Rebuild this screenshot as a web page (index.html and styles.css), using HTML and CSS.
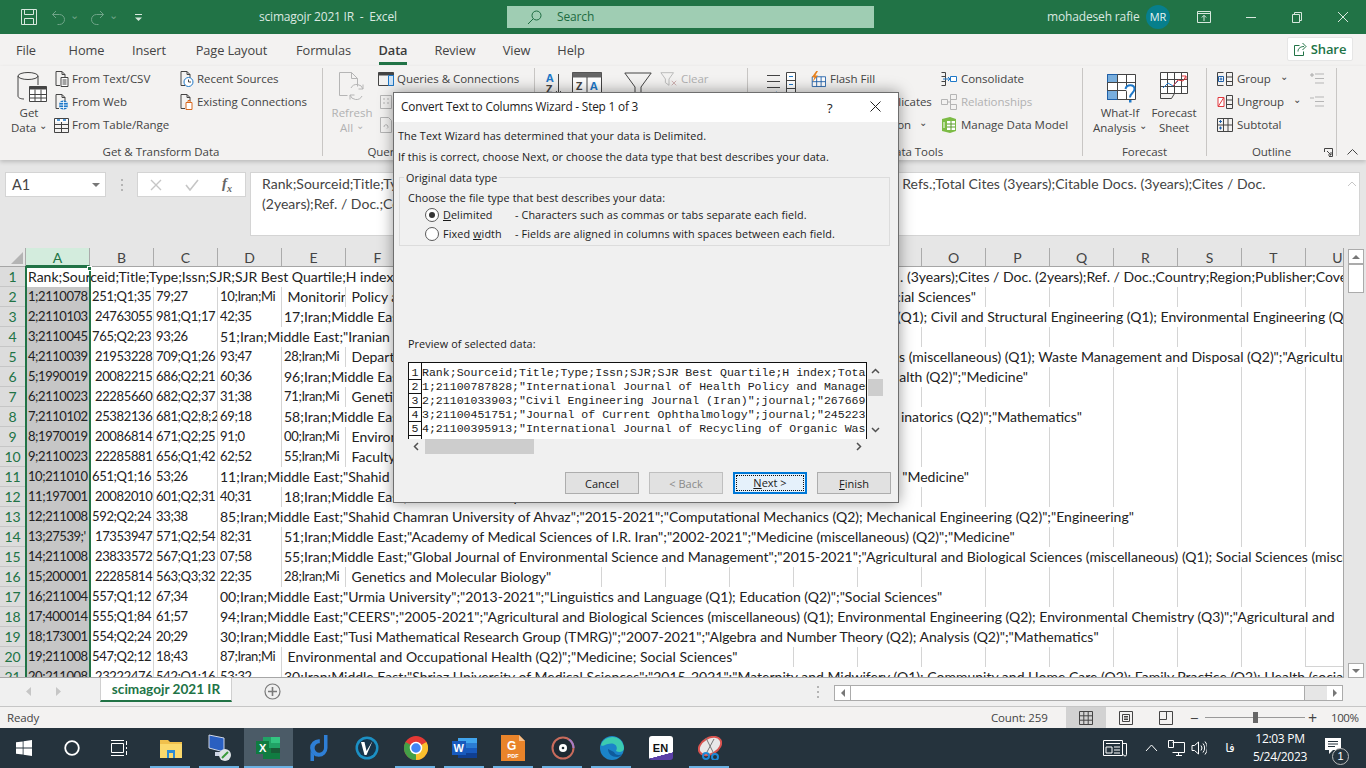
FILE: index.html
```html
<!DOCTYPE html>
<html lang="en">
<head>
<meta charset="utf-8">
<title>scimagojr 2021 IR - Excel</title>
<link rel="stylesheet" href="styles.css">
</head>
<body>
<div class="app">
  <header class="titlebar">
    <svg class="tb-save" width="16" height="16" viewBox="0 0 16 16"><path class="wl" d="M.5.5h15v15H.5zM3.500.5v5h9v-5M3.500 15.500v-6h9v6"/></svg>
    <svg class="tb-undo" width="15" height="15" viewBox="0 0 15 15"><path class="wd" d="M5 1 1.500 4.500 5 8M1.500 4.500h7a5 5 0 0 1 0 10h-2"/></svg>
    <span class="tb-chev dim">⌄</span>
    <svg class="tb-redo" width="15" height="15" viewBox="0 0 15 15"><path class="wd" d="M10 1l3.500 3.500L10 8M13.500 4.500h-7a5 5 0 0 0 0 10h2"/></svg>
    <span class="tb-chev dim">⌄</span>
    <svg class="tb-custom" width="9" height="9" viewBox="0 0 9 9"><path class="wl" d="M1 1.500h7"/><path d="M1 4.500h7L4.500 8z" fill="#d5e7dc"/></svg>
    <span class="tb-title">scimagojr 2021 IR&nbsp; -&nbsp; Excel</span>
    <div class="tb-search">
      <svg width="15" height="15" viewBox="0 0 15 15"><circle cx="9.500" cy="5.500" r="4.500" fill="none" stroke="#1d6b41"/><path d="M6.200 8.800 1 14" stroke="#1d6b41" fill="none"/></svg>
      <span>Search</span>
    </div>
    <span class="tb-user">mohadeseh rafie</span>
    <span class="tb-avatar">MR</span>
    <svg class="tb-disp" width="14" height="14" viewBox="0 0 14 14"><path class="wl" d="M.5 1.500h13v11H.5zM.5 3.500h13M7 11V5.500M4.800 7.500 7 5.300l2.200 2.200"/></svg>
    <svg class="tb-min" width="12" height="12" viewBox="0 0 12 12"><path class="wl" d="M1 6.500h10"/></svg>
    <svg class="tb-rest" width="12" height="12" viewBox="0 0 12 12"><path class="wl" d="M1.500 3.500h7v8h-7zM3.500 3.500v-2h7v8h-2"/></svg>
    <svg class="tb-close" width="12" height="12" viewBox="0 0 12 12"><path class="wl" d="m1 1 10 10M11 1 1 11"/></svg>
  </header>

  <nav class="tabs">
    <span>File</span><span>Home</span><span>Insert</span><span>Page Layout</span><span>Formulas</span>
    <span class="tab-on"><b>Data</b></span><span>Review</span><span>View</span><span>Help</span>
    <span class="share">
      <svg width="13" height="14" viewBox="0 0 13 14"><path class="gl" d="M5.500 3.500h-5v10h9v-4M4 9.500c0-3.500 3-5 6-5M8.500 1l3.500 3.500L8.500 8"/></svg>
      <b>Share</b>
    </span>
  </nav>

  <section class="ribbon">
    <div class="grp g1">
      <div class="gb-body">
        <div class="big get">
          <svg width="32" height="32" viewBox="0 0 32 32"><path class="ln" d="M2 5v20c0 2 3 3 6 3M22 5v9"/><ellipse class="ln" cx="12" cy="5" rx="10" ry="3.500"/><path d="M13.500 15.500h17v15h-17z" fill="#fff" stroke="#444"/><path d="M13.500 15.500h17v3h-17z" fill="#444"/><path class="ln" d="M13.500 23.500h17M13.500 27h17M19 18.500v12M25 18.500v12"/></svg>
          <span>Get</span><span>Data <i class="chev">⌄</i></span>
        </div>
        <div class="col c1">
          <div class="ri"><svg class="ic" width="14" height="16" viewBox="0 0 14 16"><path class="ln" d="M1.500.5h6l3 3v4M1.500.5v14h4M7.500.5v3h3"/><path d="M6.500 6.500h7v9h-7z" fill="#fff" stroke="#444"/><path class="ln" d="M8 9h4M8 11h4M8 13h4"/></svg>From Text/CSV</div>
          <div class="ri"><svg class="ic" width="14" height="16" viewBox="0 0 14 16"><path class="ln" d="M1.500.5h6l3 3v4M1.500.5v14h3M7.500.5v3h3"/><circle cx="9" cy="11" r="4.500" fill="#1e78c8"/><path d="M4.500 11h9M9 6.500v9M5.500 8.500h7M5.500 13.500h7" stroke="#fff" stroke-width=".8"/></svg>From Web</div>
          <div class="ri"><svg class="ic" width="15" height="16" viewBox="0 0 15 16"><path class="ln" d="M.5 1.500h14v14H.5zM.5 7.500h14M.5 11.500h14M7.500 4v11.500"/><path d="M1 2h13v3H1z" fill="#fff"/><path d="M3 3h3M9 3h3" stroke="#1e78c8" stroke-width="1.500"/></svg>From Table/Range</div>
        </div>
        <div class="col c2">
          <div class="ri"><svg class="ic" width="14" height="16" viewBox="0 0 14 16"><path class="ln" d="M1.500.5h6l3 3v4M1.500.5v14h4M7.500.5v3h3"/><circle cx="9" cy="11" r="4.500" fill="#fff" stroke="#1e78c8"/><path d="M9 8.500V11h2.500" fill="none" stroke="#444"/></svg>Recent Sources</div>
          <div class="ri"><svg class="ic" width="14" height="16" viewBox="0 0 14 16"><path class="ln" d="M1.500.5h6l3 3v4M1.500.5v14h4M7.500.5v3h3"/><path d="M6.500 8.500h6v7h-6zM8.500 8.500v-2h2v2" fill="#fff" stroke="#d9691e"/></svg>Existing Connections</div>
        </div>
      </div>
      <div class="g-label">Get &amp; Transform Data</div>
    </div>
    <i class="sep"></i>

    <div class="grp g2">
      <div class="gb-body">
        <div class="big refresh off">
          <svg width="28" height="32" viewBox="0 0 28 32"><path class="lo" d="M1.500 1.500h12l6 6v8M1.500 1.500v23h8M13.500 1.500v6h6"/><path class="lo" d="M25 18a6.500 6.500 0 0 0-12-1M12 24a6.500 6.500 0 0 0 12 1"/><path class="lo" d="M25 13.500V18h-4.500M12 28.500V24h4.500"/></svg>
          <span>Refresh</span><span>All <i class="chev">⌄</i></span>
        </div>
        <div class="col c3">
          <div class="ri"><svg class="ic" width="16" height="16" viewBox="0 0 16 16"><path class="ln" d="M.5 1.500h15v13H.5z"/><path d="M.5 1.500h15v3H.5z" fill="#444"/><path d="M10.500 4.500h5v10h-5z" fill="#cfe3f5" stroke="#1e78c8"/></svg>Queries &amp; Connections</div>
          <div class="ri off"><svg class="ic" width="14" height="16" viewBox="0 0 14 16"><path class="lo" d="M1.500 1.500h11v13h-11zM4 5h2M8 5h2M4 9h2M8 9h2"/></svg>Properties</div>
          <div class="ri off"><svg class="ic" width="14" height="16" viewBox="0 0 14 16"><path class="lo" d="M1.500.5h8l3 3v12h-11zM5 10a2 2 0 1 1 3 1.500"/></svg>Edit Links</div>
        </div>
      </div>
      <div class="g-label">Queries &amp; Connections</div>
    </div>
    <i class="sep"></i>

    <div class="grp g3">
      <div class="gb-body">
        <svg class="sortaz" width="16" height="30" viewBox="0 0 16 30"><text x="1" y="10" class="azb">A</text><text x="1" y="21" class="azd">Z</text><path class="ln" d="M13.500 2v20M11 19l2.500 3 2.500-3"/></svg>
        <svg class="sortbig" width="30" height="32" viewBox="0 0 30 32"><path d="M.5.500h29v30H.5z" fill="#fff" stroke="#444"/><path d="M.5.500h29v5H.5z" fill="#666"/><path class="ln" d="M15 5v26"/><text x="4" y="18" class="azd">Z</text><text x="18" y="18" class="azb">A</text></svg>
        <svg class="funnel" width="28" height="36" viewBox="0 0 28 36"><path class="ln" d="M.8 1h26.400L17 15v17l-6-4V15z"/></svg>
        <div class="col c4">
          <div class="ri off"><svg class="ic" width="20" height="16" viewBox="0 0 20 16"><path class="lo" d="M1 1h14l-5 7v7l-4-3V8z"/><path d="m13 10 5 5m0-5-5 5" stroke="#c9a8a8" fill="none"/></svg>Clear</div>
          <div class="ri off">Reapply</div>
          <div class="ri">Advanced</div>
        </div>
      </div>
      <div class="g-label">Sort &amp; Filter</div>
    </div>
    <i class="sep"></i>

    <div class="grp g4">
      <div class="gb-body">
        <svg class="ttc" width="32" height="34" viewBox="0 0 32 34"><path class="ln" d="M1 3.500h13M1 9.500h13M1 15.500h13"/><path d="M20.500.5h9v24h-9z" fill="#fff" stroke="#444"/><path d="M20.500 8.500h9M20.500 16.500h9" stroke="#444"/><path d="M23 4.500h4M23 12.500h4M23 20.500h4" stroke="#1e78c8"/><path d="M1 30A12 12 0 0 1 11 20" fill="none" stroke="#1e78c8"/></svg>
        <div class="col c5">
          <div class="ri"><svg class="ic2" width="18" height="18" viewBox="0 0 18 18"><path d="M2.500 6.500h15v11h-15z" fill="#fff" stroke="#1e5fa8"/><path d="M2.500 12h15M7.500 6.500v11M12.500 6.500v11" stroke="#1e5fa8"/><path d="M7 0 2 7h3l-2 5 6-7H6l3-5z" fill="#e8821e"/></svg>Flash Fill</div>
          <div class="ri ind">Remove Duplicates</div>
          <div class="ri ind">Data Validation <i class="chev ch-dv">⌄</i></div>
        </div>
        <div class="col c6">
          <div class="ri"><svg class="ic2" width="16" height="16" viewBox="0 0 16 16"><path class="ln" d="M.5 1.500h4v4h-4M.5 10.500h4v4h-4M4.500 3.500v8"/><path d="M9.500 5.500h6v5h-6z" fill="#fff" stroke="#1e78c8"/><path d="M2 8h7M7 6l2 2-2 2" fill="none" stroke="#1e78c8"/></svg>Consolidate</div>
          <div class="ri off"><svg class="ic2" width="16" height="16" viewBox="0 0 16 16"><path class="lo" d="M.5 5.500h6v5h-6zM9.500.5h6v5h-6zM9.500 10.500h6v5h-6zM6.500 8h3M9.500 3v10"/></svg>Relationships</div>
          <div class="ri"><svg class="ic2" width="16" height="18" viewBox="0 0 16 18"><path d="M1 3 9 1l6 2v12l-6 2-8-2z" fill="#7cbb45"/><path d="M6 5h8v9H6z" fill="#fff"/><path d="M6 8h8M6 11h8M10 5v9" stroke="#5a9a2c"/><path d="M3 6v6" stroke="#fff"/></svg>Manage Data Model</div>
        </div>
      </div>
      <div class="g-label gl-dt">Data Tools</div>
    </div>
    <i class="sep"></i>

    <div class="grp g5">
      <div class="gb-body">
        <div class="big whatif">
          <svg width="31" height="32" viewBox="0 0 31 32"><path d="M.5 2.500h28v25H.5z" fill="#fff" stroke="#444"/><path d="M.5 2.500h10v8H.5zM.5 18.500h10v9H.5z" fill="#78aedd" stroke="#1e5fa8"/><path class="ln" d="M.5 10.500h28M.5 18.500h28M10.500 2.500v25M19.500 2.500v25"/><path d="M18.500 17c1-5 9-5 9 0 0 4-4.500 4-4.500 8.500" fill="#fff" stroke="#1e78c8" stroke-width="2"/><path d="M22 28h2.500v2.500H22z" fill="#1e78c8"/></svg>
          <span>What-If</span><span>Analysis <i class="chev">⌄</i></span>
        </div>
        <div class="big forecast">
          <svg width="28" height="32" viewBox="0 0 28 32"><path d="M.5.500h27v21H.5z" fill="#fff" stroke="#444"/><path class="ln" d="M.5 7.500h27M.5 14.500h27M7.500.5v21M14.500.5v21M21.500.5v21M.5 21.500v5h11l3-5"/><path d="M3 16l5-5 5 3 5-5" fill="none" stroke="#1e78c8"/><path d="M13 14l5-6 5 1 3-5M22 4h4v4" fill="none" stroke="#e0393e"/></svg>
          <span>Forecast</span><span>Sheet</span>
        </div>
      </div>
      <div class="g-label">Forecast</div>
    </div>
    <i class="sep"></i>

    <div class="grp g6">
      <div class="gb-body">
        <div class="col c7">
          <div class="ri"><svg class="ic2" width="16" height="16" viewBox="0 0 16 16"><path class="ln" d="M6.500 1.500h-6v13h6M9.500 1.500h6v13h-6zM9.500 6h6M9.500 10.500h6"/><path d="M1.500 5.500h5v5h-5z" fill="#fff" stroke="#1e5fa8"/><path d="M2.500 8h3M4 6.500v3" stroke="#1e5fa8"/></svg>Group<i class="chev ch-gr">⌄</i></div>
          <div class="ri"><svg class="ic2" width="16" height="16" viewBox="0 0 16 16"><path class="ln" d="M9.500 1.500h6v13h-6zM9.500 6h6M9.500 10.500h6"/><path d="M1 3.500h6v9H1z" fill="#fff" stroke="#e0393e"/><path d="m1.500 12 5-8" stroke="#e0393e"/></svg>Ungroup<i class="chev ch-ug">⌄</i></div>
          <div class="ri"><svg class="ic2" width="16" height="16" viewBox="0 0 16 16"><path class="ln" d="M.5 1.500h15v13H.5zM.5 8h15M6.500 1.500v13M11 1.500v13"/><path d="M2 4.500h3M3.500 3v3M2 11h3M3.500 9.500v3" stroke="#1e5fa8"/></svg>Subtotal</div>
        </div>
        <div class="col c8">
          <div class="ri"><svg width="14" height="13" viewBox="0 0 14 13"><path class="lo" d="M5 2h9M5 6.500h9M5 11h9"/><path d="M0 3h4M2 1v4" stroke="#a9a9a9"/></svg></div>
          <div class="ri"><svg width="14" height="13" viewBox="0 0 14 13"><path class="lo" d="M5 2h9M5 6.500h9M5 11h9M0 3h4"/></svg></div>
        </div>
      </div>
      <div class="g-label gl-ol">Outline
        <svg class="launch" width="9" height="9" viewBox="0 0 9 9"><path class="ln" d="M.5 4V.5h8v8H5M3 3l4 4M7 4v3H4"/></svg>
      </div>
    </div>
    <i class="sep"></i>
    <svg class="collapse" width="11" height="6" viewBox="0 0 11 6"><path class="ln" d="m.5 5.500 5-5 5 5"/></svg>
  </section>

  <section class="fbar">
    <div class="namebox"><span>A1</span><i class="nb-caret"></i></div>
    <div class="fb-dots"><i></i><i></i><i></i></div>
    <div class="fb-btns">
      <svg width="12" height="12" viewBox="0 0 12 12"><path d="m1 1 10 10M11 1 1 11" stroke="#c6c6c6" stroke-width="1.400" fill="none"/></svg>
      <svg width="14" height="12" viewBox="0 0 14 12"><path d="m1 6 4 5 8-10" stroke="#c6c6c6" stroke-width="1.600" fill="none"/></svg>
      <span class="fx">f<sub>x</sub></span>
    </div>
    <div class="finput">
      <p>Rank;Sourceid;Title;Type;Issn;SJR;SJR Best Quartile;H index;Total Docs. (2021);Total Docs. (3years);Total Refs.;Total Cites (3years);Citable Docs. (3years);Cites / Doc.<br>(2years);Ref. / Doc.;Country;Region;Publisher;Coverage;Categories;Areas</p>
      <svg class="fi-up" width="10" height="6" viewBox="0 0 10 6"><path d="m1 5 4-4 4 4" fill="none" stroke="#c6c6c6"/></svg>
    </div>
  </section>

  <section class="sheet">
    <div class="grid">
      <div class="row head">
        <span class="corner"></span><span class="col-a">A</span><span>B</span><span>C</span><span>D</span><span>E</span><span>F</span><span>G</span><span>H</span><span>I</span><span>J</span><span>K</span><span>L</span><span>M</span><span>N</span><span>O</span><span>P</span><span>Q</span><span>R</span><span>S</span><span>T</span><span>U</span>
      </div>
      <div class="row"><span class="rh">1</span><span class="s13 first">Rank;Sourceid;Title;Type;Issn;SJR;SJR Best Quartile;H index;Total Docs. (2021);Total Docs. (3years);Total Refs.;Total Cites (3years);Citable Docs.</span><span class="s8 i-r1">. (3years);Cites / Doc. (2years);Ref. / Doc.;Country;Region;Publisher;Coverage;Categories;Areas</span></div>
      <div class="row"><span class="rh">2</span><span class="a">1;2110078</span><span>251;Q1;35</span><span>79;27</span><span>10;Iran;Mi</span><span class="s1"> Monitoring</span><span class="s2"> Policy and Management</span><span class="s8 tail p9">Social Sciences"</span><span></span><span></span><span></span><span></span><span></span><span></span></div>
      <div class="row"><span class="rh">3</span><span class="a">2;2110103</span><span> 24763055'</span><span>981;Q1;17</span><span>42;35</span><span class="s9">17;Iran;Middle East;"Pouyan Press"</span><span class="s8 i-r3">(Q1); Civil and Structural Engineering (Q1); Environmental Engineering (Q1)</span></div>
      <div class="row"><span class="rh">4</span><span class="a">3;2110045</span><span>765;Q2;23</span><span>93;26</span><span class="s11">51;Iran;Middle East;"Iranian Society of Ophthalmology"</span><span></span><span></span><span></span><span></span><span></span><span></span><span></span></div>
      <div class="row"><span class="rh">5</span><span class="a">4;2110039</span><span> 21953228'</span><span>709;Q1;26</span><span>93;47</span><span>28;Iran;Mi</span><span class="s8"> Department of Environment</span><span class="s8 i-r5">s (miscellaneous) (Q1); Waste Management and Disposal (Q2)";"Agricultural</span></div>
      <div class="row"><span class="rh">6</span><span class="a">5;1990019</span><span> 20082215'</span><span>686;Q2;21</span><span>60;36</span><span class="s3">96;Iran;Middle East;"Tehran</span><span class="s9 tail p21">alth (Q2)";"Medicine"</span><span></span><span></span><span></span><span></span><span></span></div>
      <div class="row"><span class="rh">7</span><span class="a">6;2110023</span><span> 22285660'</span><span>682;Q2;37</span><span>31;38</span><span>71;Iran;Mi</span><span class="s9"> Genetics</span><span></span><span></span><span></span><span></span><span></span><span></span><span></span></div>
      <div class="row"><span class="rh">8</span><span class="a">7;2110102</span><span> 25382136'</span><span>681;Q2;8;2</span><span>69;18</span><span class="s3">58;Iran;Middle East;"Azarbaijan</span><span class="s10 tail p31">inatorics (Q2)";"Mathematics"</span><span></span><span></span><span></span><span></span></div>
      <div class="row"><span class="rh">9</span><span class="a">8;1970019</span><span> 20086814'</span><span>671;Q2;25</span><span>91;0</span><span>00;Iran;Mi</span><span class="s9"> Environmental</span><span></span><span></span><span></span><span></span><span></span><span></span><span></span></div>
      <div class="row"><span class="rh">10</span><span class="a">9;2110023</span><span> 22285881'</span><span>656;Q1;42</span><span>62;52</span><span>55;Iran;Mi</span><span class="s9"> Faculty of Medicine</span><span></span><span></span><span></span><span></span><span></span><span></span><span></span></div>
      <div class="row"><span class="rh">11</span><span class="a">10;211010</span><span>651;Q1;16</span><span>53;26</span><span class="s4">11;Iran;Middle East;"Shahid Beheshti University"</span><span class="s8 tail p16">"Medicine"</span><span></span><span></span><span></span><span></span><span></span><span></span></div>
      <div class="row"><span class="rh">12</span><span class="a">11;197001</span><span> 20082010'</span><span>601;Q2;31</span><span>40;31</span><span class="s10">18;Iran;Middle East;"Tehran University"</span><span></span><span></span><span></span><span></span><span></span><span></span><span></span></div>
      <div class="row"><span class="rh">13</span><span class="a">12;211008</span><span>592;Q2;24</span><span>33;38</span><span class="s15">85;Iran;Middle East;"Shahid Chamran University of Ahvaz";"2015-2021";"Computational Mechanics (Q2); Mechanical Engineering (Q2)";"Engineering"</span><span></span><span></span><span></span></div>
      <div class="row"><span class="rh">14</span><span class="a">13;27539;'</span><span> 17353947'</span><span>571;Q2;54</span><span>82;31</span><span class="s12">51;Iran;Middle East;"Academy of Medical Sciences of I.R. Iran";"2002-2021";"Medicine (miscellaneous) (Q2)";"Medicine"</span><span></span><span></span><span></span><span></span><span></span></div>
      <div class="row"><span class="rh">15</span><span class="a">14;211008</span><span> 23833572'</span><span>567;Q1;23</span><span>07;58</span><span class="s17">55;Iran;Middle East;"Global Journal of Environmental Science and Management";"2015-2021";"Agricultural and Biological Sciences (miscellaneous) (Q1); Social Sciences (miscellaneous)</span></div>
      <div class="row"><span class="rh">16</span><span class="a">15;200001</span><span> 22285814'</span><span>563;Q3;32</span><span>22;35</span><span>28;Iran;Mi</span><span class="s4"> Genetics and Molecular Biology"</span><span></span><span></span><span></span><span></span><span></span><span></span><span></span><span></span><span></span><span></span><span></span><span></span></div>
      <div class="row"><span class="rh">17</span><span class="a">16;211004</span><span>557;Q1;12</span><span>67;34</span><span class="s12">00;Iran;Middle East;"Urmia University";"2013-2021";"Linguistics and Language (Q1); Education (Q2)";"Social Sciences"</span><span></span><span></span><span></span><span></span><span></span><span></span></div>
      <div class="row"><span class="rh">18</span><span class="a">17;400014</span><span>555;Q1;84</span><span>61;57</span><span class="s18">94;Iran;Middle East;"CEERS";"2005-2021";"Agricultural and Biological Sciences (miscellaneous) (Q1); Environmental Engineering (Q2); Environmental Chemistry (Q3)";"Agricultural and</span></div>
      <div class="row"><span class="rh">19</span><span class="a">18;173001</span><span>554;Q2;24</span><span>20;29</span><span class="s14">30;Iran;Middle East;"Tusi Mathematical Research Group (TMRG)";"2007-2021";"Algebra and Number Theory (Q2); Analysis (Q2)";"Mathematics"</span><span></span><span></span><span></span><span></span></div>
      <div class="row"><span class="rh">20</span><span class="a">19;211008</span><span>547;Q2;12</span><span>18;43</span><span>87;Iran;Mi</span><span class="s8"> Environmental and Occupational Health (Q2)";"Medicine; Social Sciences"</span><span></span><span></span><span></span><span></span><span></span><span></span><span></span><span></span></div>
      <div class="row"><span class="rh">21</span><span class="a">20;211008</span><span> 23222476'</span><span>542;Q1;16</span><span>53;32</span><span class="s17">30;Iran;Middle East;"Shriaz University of Medical Sciences";"2015-2021";"Maternity and Midwifery (Q1); Community and Home Care (Q2); Family Practice (Q2); Health (social science)</span></div>
      <div class="sel"><i></i></div>
    </div>
    <div class="vscroll">
      <div class="vbtn"><i class="tri-up"></i></div>
      <div class="vthumb"></div>
      <div class="vtrack"></div>
      <div class="vbtn"><i class="tri-dn"></i></div>
    </div>
  </section>

  <section class="sheetbar">
    <svg class="nav1" width="6" height="9" viewBox="0 0 6 9"><path d="M5 0v9L0 4.500z" fill="#c6c6c6"/></svg>
    <svg class="nav2" width="6" height="9" viewBox="0 0 6 9"><path d="M1 0v9l5-4.500z" fill="#c6c6c6"/></svg>
    <div class="sheettab">scimagojr 2021 IR</div>
    <svg class="addsheet" width="17" height="17" viewBox="0 0 17 17"><circle cx="8.500" cy="8.500" r="7.500" fill="none" stroke="#7a7a7a" stroke-width="1.200"/><path d="M4 8.500h9M8.500 4v9" stroke="#7a7a7a" stroke-width="1.600"/></svg>
    <div class="sb-dots"><i></i><i></i><i></i></div>
    <div class="hscroll">
      <div class="hbtn"><i class="tri-l"></i></div>
      <div class="hthumb"></div>
      <div class="htrack"></div>
      <div class="hbtn"><i class="tri-r"></i></div>
    </div>
  </section>

  <footer class="status">
    <span class="ready">Ready</span>
    <span class="count">Count: 259</span>
    <span class="view on"><svg width="14" height="14" viewBox="0 0 14 14"><path class="ln" d="M.5.5h13v13H.5zM.5 4.800h13M.5 9.200h13M4.800.5v13M9.200.5v13"/></svg></span>
    <span class="view"><svg width="14" height="14" viewBox="0 0 14 14"><path class="ln" d="M.5.5h13v13H.5zM3.500 3.500h7v7h-7zM5 5.500h4M5 7h4M5 8.500h4"/></svg></span>
    <span class="view"><svg width="14" height="14" viewBox="0 0 14 14"><path class="ln" d="M.5.5h13v13H.5zM.5 8.500h7V.5"/></svg></span>
    <span class="zm-minus">−</span>
    <span class="slider"><i></i></span>
    <span class="zm-plus">+</span>
    <span class="zoom">100%</span>
  </footer>

  <footer class="taskbar">
    <span class="tk wide"><svg width="16" height="16" viewBox="0 0 16 16"><path d="M0 2.300 6.700 1.400v6.200H0zM7.500 1.300 16 0v7.600H7.500zM0 8.400h6.700v6.200L0 13.700zM7.500 8.400H16V16l-8.500-1.200z" fill="#fff"/></svg></span>
    <span class="tk wide"><svg width="16" height="16" viewBox="0 0 16 16"><circle cx="8" cy="8" r="6.800" fill="none" stroke="#fff" stroke-width="1.800"/></svg></span>
    <span class="tk wide"><svg width="18" height="16" viewBox="0 0 18 16"><path d="M.5 3.500h12v9H.5zM0 .5h13M0 15.500h13M15.500 1v4M15.500 7v2M15.500 11v4" fill="none" stroke="#fff"/></svg></span>
    <span class="tk first run"><svg width="22" height="20" viewBox="0 0 22 20"><path d="M0 2h8l2 2h12v16H0z" fill="#f0c04c"/><path d="M0 6h22v14H0z" fill="#fbd96c"/><path d="M7 12h8v8h-2v-5H9v5H7z" fill="#2d8bd3"/></svg></span>
    <span class="tk run"><svg width="24" height="28" viewBox="0 0 24 28"><path d="M1 1l15 3v14L1 14z" fill="#2a5fc0" stroke="#cfd6e6"/><path d="M7 18h8v4H7z" fill="#cfd6e6"/><circle cx="17" cy="21" r="6" fill="#dfe4e6"/><path d="M14 24l6-6" stroke="#3a9a3a" stroke-width="2"/></svg></span>
    <span class="tk active"><svg width="25" height="24" viewBox="0 0 25 24"><path d="M7 1h17v22H7z" fill="#21a366"/><path d="M15 1h9v6h-9z" fill="#33c481"/><path d="M15 7h9v5h-9z" fill="#21a366"/><path d="M7 12h17v11H7z" fill="#107c41"/><path d="M15 12h9v5h-9z" fill="#185c37"/><path d="M0 5h13v13H0z" fill="#107c41"/><text x="3" y="15.500" class="tkx">X</text></svg></span>
    <span class="tk"><svg width="20" height="26" viewBox="0 0 20 26"><path d="M16 0h3.500v13a8.700 8.700 0 1 1-8.700-8.700h1v4h-1a4.700 4.700 0 1 0 5.200 4.700z" fill="#2e7fd6"/><path d="M2.500 16v10h3.500v-6z" fill="#2e7fd6"/></svg></span>
    <span class="tk"><svg width="24" height="24" viewBox="0 0 24 24"><circle cx="12" cy="12" r="11.500" fill="#1c90c4"/><circle cx="12" cy="12" r="9" fill="#18344a"/><path d="M6 6h3.500l2 9 6-10-6 14H9.500z" fill="#fff"/></svg></span>
    <span class="tk run"><svg width="24" height="24" viewBox="0 0 24 24"><circle cx="12" cy="12" r="12" fill="#e53935"/><path d="M12 12 22.400 6A12 12 0 0 1 12 24z" fill="#fbc02d"/><path d="M12 12 12 24A12 12 0 0 1 1.600 6z" fill="#43a047"/><circle cx="12" cy="12" r="5.500" fill="#4285f4" stroke="#fff" stroke-width="1.500"/></svg></span>
    <span class="tk run"><svg width="25" height="24" viewBox="0 0 25 24"><path d="M6 2h19v20H6z" fill="#2b7cd3"/><path d="M6 2h19v5H6z" fill="#41a5ee"/><path d="M6 12h19v5H6z" fill="#185abd"/><path d="M6 17h19v5H6z" fill="#103f91"/><path d="M0 5h14v14H0z" fill="#185abd"/><text x="1.500" y="15.500" class="tkx">W</text></svg></span>
    <span class="tk run"><svg width="25" height="26" viewBox="0 0 25 26"><path d="M0 0h18l6 6v20H0z" fill="#e9842a"/><path d="M18 0l6 6h-6z" fill="#f6c08b"/><text x="6" y="15" class="tkg">G</text><text x="6.500" y="23" class="tkp">PDF</text></svg></span>
    <span class="tk run"><svg width="24" height="24" viewBox="0 0 24 24"><circle cx="12" cy="12" r="10.500" fill="#1e2a33" stroke="#c86b5c" stroke-width="2"/><path d="M18 3.500A10.500 10.500 0 0 1 22.500 12" stroke="#a37cc9" stroke-width="2" fill="none"/><circle cx="12" cy="12" r="4" fill="#fff"/><circle cx="12" cy="12" r="1.300" fill="#1e2a33"/></svg></span>
    <span class="tk run"><svg width="24" height="24" viewBox="0 0 24 24"><circle cx="12" cy="12" r="12" fill="#1b84c9"/><path d="M1 9C4-1 22-3 24 12c0 4-5 5-8 3 3-6-3-9-8-7-4 1-6 3-7 1z" fill="#3ccbb0"/><path d="M8 13c0 5 4 8 9 8 2 0 4-1 5-3-3 2-7 1-8-2z" fill="#0f5b9c"/></svg></span>
    <span class="tk en"><span class="en-box">EN</span></span>
    <span class="tk run snip"><svg width="24" height="24" viewBox="0 0 24 24"><ellipse cx="12" cy="10" rx="12" ry="8" transform="rotate(-30 12 10)" fill="#e8e8e8" stroke="#d9534f" stroke-width="2"/><path d="m8 2 8 16M16 3l-7 13" stroke="#777" fill="none"/><circle cx="8" cy="20" r="3" fill="none" stroke="#1e88d6" stroke-width="2"/><circle cx="17" cy="21" r="3" fill="none" stroke="#1e88d6" stroke-width="2"/></svg></span>
    <div class="tray">
      <svg class="tr-news" width="24" height="17" viewBox="0 0 24 17"><path d="M.5.500h19v15H.5zM19.500 3.500h4v11a1.500 1.500 0 0 1-3 0M3 3.500h14M3 7h6v6H3zM11 7h6M11 10h6M11 13h6" fill="none" stroke="#fff"/></svg>
      <svg class="tr-up" width="13" height="8" viewBox="0 0 13 8"><path d="m1 7 5.500-6L12 7" fill="none" stroke="#fff"/></svg>
      <svg class="tr-net" width="17" height="16" viewBox="0 0 17 16"><path d="M4.500 2.500h12v10h-12M8 15.500h6M10.500 12.500v3M.5.500h5v7h-5z" fill="none" stroke="#fff"/></svg>
      <svg class="tr-vol" width="16" height="16" viewBox="0 0 16 16"><path d="M1 5.500h2.500L7.500 2v12l-4-3.500H1zM10 5.500a4 4 0 0 1 0 5M12 3.500a7 7 0 0 1 0 9M14 1.500a10 10 0 0 1 0 13" fill="none" stroke="#fff"/></svg>
      <span class="tr-lang">فا</span>
      <div class="tr-clock"><span>12:03 PM</span><span>5/24/2023</span></div>
      <span class="tr-note">
        <svg width="17" height="16" viewBox="0 0 17 16"><path d="M0 0h16v12H8l-4 4v-4H0z" fill="#fff"/><path d="M3 3.500h10M3 6h10M3 8.500h7" stroke="#25333d"/></svg>
        <b>1</b>
      </span>
    </div>
  </footer>

  <div class="dialog" role="dialog">
    <div class="d-title">
      <span>Convert Text to Columns Wizard - Step 1 of 3</span>
      <span class="d-help">?</span>
      <svg class="d-x" width="11" height="11" viewBox="0 0 11 11"><path d="m.5.500 10 10M10.500.500l-10 10" stroke="#222" fill="none"/></svg>
    </div>
    <div class="d-body">
      <p class="d-p1">The Text Wizard has determined that your data is Delimited.</p>
      <p class="d-p2">If this is correct, choose Next, or choose the data type that best describes your data.</p>
      <div class="d-group">
        <span class="d-legend">Original data type</span>
        <p class="d-choose">Choose the file type that best describes your data:</p>
        <div class="d-radio"><i class="radio on"></i><span class="r-name"><u>D</u>elimited</span><span>- Characters such as commas or tabs separate each field.</span></div>
        <div class="d-radio"><i class="radio"></i><span class="r-name">Fixed <u>w</u>idth</span><span>- Fields are aligned in columns with spaces between each field.</span></div>
      </div>
      <p class="d-prev">Preview of selected data:</p>
      <div class="pv">
        <div class="pv-box">
          <div class="pv-l"><b>1</b><span>Rank;Sourceid;Title;Type;Issn;SJR;SJR Best Quartile;H index;Total Docs.</span></div>
          <div class="pv-l"><b>2</b><span>1;21100787828;"International Journal of Health Policy and Management"</span></div>
          <div class="pv-l"><b>3</b><span>2;21101033903;"Civil Engineering Journal (Iran)";journal;"26766957"</span></div>
          <div class="pv-l"><b>4</b><span>3;21100451751;"Journal of Current Ophthalmology";journal;"24522325"</span></div>
          <div class="pv-l"><b>5</b><span>4;21100395913;"International Journal of Recycling of Organic Waste"</span></div>
          <div class="pv-l"><b></b><span></span></div>
        </div>
        <div class="pv-v">
          <svg width="9" height="6" viewBox="0 0 9 6"><path d="m1 5 3.500-3.500L8 5" fill="none" stroke="#505050" stroke-width="1.500"/></svg>
          <i></i>
          <svg width="9" height="6" viewBox="0 0 9 6"><path d="m1 1 3.500 3.500L8 1" fill="none" stroke="#505050" stroke-width="1.500"/></svg>
        </div>
      </div>
      <div class="pv-h">
        <svg width="6" height="9" viewBox="0 0 6 9"><path d="M5 1 1.500 4.500 5 8" fill="none" stroke="#505050" stroke-width="1.500"/></svg>
        <i></i>
        <svg width="6" height="9" viewBox="0 0 6 9"><path d="m1 1 3.500 3.500L1 8" fill="none" stroke="#505050" stroke-width="1.500"/></svg>
      </div>
      <div class="d-btns">
        <button class="btn">Cancel</button>
        <button class="btn dis">&lt; Back</button>
        <button class="btn def"><span><u>N</u>ext &gt;</span></button>
        <button class="btn"><u>F</u>inish</button>
      </div>
    </div>
  </div>
</div>
</body>
</html>
```
FILE: styles.css
```css
*{box-sizing:border-box}
html,body{margin:0;padding:0;height:768px;overflow:hidden}
body{font-family:"Open Sans","Noto Sans",sans-serif;font-size:12px;color:#444;background:#e6e6e6}
p{margin:0}
.app{position:relative;width:1366px;height:768px;display:flex;flex-direction:column;overflow:hidden}
.wl{fill:none;stroke:#d8e8de}
.wd{fill:none;stroke:#6fa488}
.gl{fill:none;stroke:#217346}
.ln{fill:none;stroke:#444}
.lo{fill:none;stroke:#b5b5b5}

/* title bar */
.titlebar{height:34px;background:#217346;color:#dbe9e1;display:flex;align-items:center;flex:none;letter-spacing:-.15px}
.tb-save{margin-left:21px}
.tb-undo{margin-left:14px}
.tb-redo{margin-left:11px}
.tb-chev{width:10px;text-align:center;margin-left:3px;margin-top:-5px;font-size:11px}
.dim{color:#6fa488}
.tb-custom{margin-left:16px}
.tb-title{margin-left:116px;width:248px;white-space:nowrap;letter-spacing:-.2px;margin-bottom:2px}
.tb-search{width:367px;height:22px;background:#9fcdb3;color:#1d6b41;display:flex;align-items:center;padding-left:20px;gap:15px}
.tb-search span{margin-bottom:2px}
.tb-user{margin-left:173px;width:99px;white-space:nowrap;margin-bottom:2px}
.tb-avatar{width:24px;height:24px;border-radius:50%;background:#077f8c;color:#e6f3f4;text-align:center;line-height:24px;font-size:11px}
.tb-disp{margin-left:27px}
.tb-min{margin-left:34px}
.tb-rest{margin-left:34px}
.tb-close{margin-left:34px}

/* tabs */
.tabs{height:32px;flex:none;background:#f3f2f1;display:grid;grid-template-columns:52px 69px 56px 109px 75px 64px 60px 63px 46px 693px 66px;align-items:center;text-align:center;font-size:12.800px;letter-spacing:-.1px;padding-bottom:1px}
.tab-on b{display:inline-block;font-weight:600;border-bottom:3px solid #217346;margin-bottom:-8px;padding-bottom:3px;color:#3b3b3b}
.share{grid-column:11;height:24px;background:#fff;border:1px solid #e6e6e6;border-radius:2px;color:#217346;font-size:13px;display:flex;align-items:center;justify-content:center;gap:4px;margin-top:-2px}
.share b{font-weight:600}

/* ribbon */
.ribbon{height:94px;flex:none;background:#f3f2f1;display:flex;position:relative;box-shadow:0 2px 4px rgba(0,0,0,.18);z-index:2;font-size:11.500px;letter-spacing:-.04px;white-space:nowrap}
.sep{width:1px;height:88px;background:#c8c6c4;margin-top:2px;flex:none}
.grp{flex:none;display:flex;flex-direction:column}
.gb-body{height:78px;display:flex}
.g-label{text-align:center;line-height:16px;position:relative}
.g1{width:322px}.g2{width:211px}.g3{width:212px}.g4{width:334px}.g5{width:123px}.g6{width:129px}
.big{display:flex;flex-direction:column;align-items:center;padding-top:5px;flex:none}
.big svg{margin-bottom:2px;height:32px}
.big span{line-height:15px}
.chev{font-style:normal;font-size:10px;position:relative;top:-3px}
.col{display:flex;flex-direction:column;padding-top:1px;flex:none}
.ri{height:23px;display:flex;align-items:center}
.ic{width:18px;flex:none;padding-right:3px}
.ic2{width:20px;flex:none;padding-right:4px}
.off{color:#b1b1b1}
.ind{padding-left:20px}
.get{width:54px;margin-left:2px}
.get svg{margin-left:5px}
.c1{width:125px;margin-left:-2px}
.refresh{width:52px;margin-left:3px}
.c3{margin-left:0}
.c3 .ic{width:19px}
.sortaz{margin:6px 0 0 10px}
.sortbig{margin:6px 0 0 11px}
.funnel{margin:6px 0 0 22px}
.c4{margin-left:8px}
.c4 .ic{width:21px}
.azb,.azd{font-size:11px;font-weight:700}
.azb{fill:#1e78c8}
.azd{fill:#444}
.ttc{margin:6px 0 0 18px}
.c5{width:131px;margin-left:12px}
.ch-dv{margin-left:8px}
.whatif{width:54px;margin-left:10px;padding-top:4px}
.whatif svg{margin:2px 0 1px 5px}
.forecast{width:54px;padding-top:6px}
.forecast svg{margin-bottom:1px}
.c7{width:93px;margin-left:10px}
.ch-gr{margin-left:9px}
.ch-ug{margin-left:9px}
.launch{position:absolute;right:3px;top:4px}
.collapse{margin:83px 0 0 10px}

/* formula bar */
.fbar{height:88px;flex:none;background:#e6e6e6;display:flex;align-items:flex-start;padding-top:12px}
.namebox{width:101px;height:25px;margin-left:5px;background:#fff;border:1px solid #d4d4d4;display:flex;align-items:center;justify-content:space-between;padding:0 5px 0 6px;font:14.500px Lato,sans-serif;color:#444}
.nb-caret{width:0;height:0;border:4px solid transparent;border-top:4px solid #777;border-bottom:0;margin-right:0}
.fb-dots{width:31px;height:25px;display:flex;flex-direction:column;align-items:center;justify-content:center;gap:3px}
.fb-dots i{width:2px;height:2px;background:#b4b4b4}
.fb-btns{width:109px;height:25px;background:#fff;border:1px solid #d4d4d4;display:flex;align-items:center;padding-left:12px;gap:23px}
.fx{font:italic 700 15px "Liberation Serif",serif;color:#666}
.fx sub{font-size:10px}
.finput{width:1110px;height:64px;margin-left:4px;background:#fff;border:1px solid #d4d4d4;padding:1px 0 0 11px;font:14px/20px Lato,sans-serif;color:#444;letter-spacing:.025px;white-space:nowrap;position:relative}
.fi-up{position:absolute;right:2px;top:8px}

/* sheet */
.sheet{height:430px;flex:none;display:flex;background:#e6e6e6}
.grid{width:1344px;height:430px;overflow:hidden;position:relative;border-right:1px solid #a6a6a6;border-bottom:1px solid #a6a6a6}
.row{display:grid;grid-template-columns:26px repeat(21,64px);height:20px;font:14px/19px Lato,sans-serif;color:#222;background:#fff;border-bottom:1px solid #d4d4d4;white-space:pre}
.row>span{overflow:hidden;background:#fff;border-right:1px solid #d4d4d4;padding-left:2px;min-width:0;font-size:13px;letter-spacing:-.35px}
.row>span[class]{letter-spacing:0;font-size:14px}
.row>.rh{background:#dcdcdc;color:#217346;text-align:center;padding:0;border-right:1px solid #a6a6a6;border-bottom:1px solid #c6c6c6;height:20px}
.row>span.a{background:#c6c6c6;font-size:13px;letter-spacing:-.45px;color:#222}
.row.head{height:19px;background:#e6e6e6;border-bottom:1px solid #a6a6a6;color:#444}
.row.head>span{background:#e6e6e6;text-align:center;border-right:1px solid #ababab;padding:0;letter-spacing:0;font-size:14px}
.row.head>.corner{position:relative}
.corner::after{content:"";position:absolute;right:2px;bottom:2px;border-style:solid;border-width:0 0 12px 12px;border-color:transparent transparent #b4b4b4}
.row.head>.col-a{background:#d3ecdd;color:#217346;border-bottom:1px solid #217346}
.s2{grid-column:span 2}.s3{grid-column:span 3}.s4{grid-column:span 4}.s8{grid-column:span 8}.s9{grid-column:span 9}.s10{grid-column:span 10}.s11{grid-column:span 11}.s12{grid-column:span 12}.s13{grid-column:span 13}.s14{grid-column:span 14}.s15{grid-column:span 15}.s17{grid-column:span 17}.s18{grid-column:span 18}
.row>.tail{text-align:right;direction:rtl;unicode-bidi:plaintext}
.row>.p9{padding-right:9px}.row>.p21{padding-right:21px}.row>.p31{padding-right:31px}.row>.p16{padding-right:16px}
.row>.i-r1{padding-left:42px}.row>.i-r3{padding-left:39px}.row>.i-r5{padding-left:41px}
.sel{position:absolute;left:25px;top:18px;width:66px;height:420px;border:2px solid #217346;pointer-events:none}
.sel i{position:absolute;right:-3px;top:-2px;width:5px;height:5px;background:#217346;border:1px solid #fff}
.vscroll{width:22px;display:flex;flex-direction:column;align-items:center;padding:1px 0 0 2px}
.vbtn{width:16px;height:15px;background:#fff;border:1px solid #ababab;display:flex;align-items:center;justify-content:center;flex:none}
.vthumb{width:16px;height:29px;background:#fff;border:1px solid #ababab;flex:none}
.vtrack{flex:1}
.tri-up{border:4px solid transparent;border-bottom:4px solid #777;border-top:0}
.tri-dn{border:4px solid transparent;border-top:4px solid #777;border-bottom:0}

/* sheet tabs */
.sheetbar{height:29px;flex:none;background:#f0f0f0;border-bottom:1px solid #c6c6c6;display:flex;align-items:flex-start}
.nav1{margin:9px 0 0 26px}
.nav2{margin:9px 0 0 23px}
.sheettab{width:132px;height:24px;margin-left:39px;background:#fff;border-bottom:2px solid #217346;border-left:1px solid #d0d0d0;border-right:1px solid #d0d0d0;color:#217346;font:700 13.600px/22px Lato,sans-serif;text-align:center}
.addsheet{margin:5px 0 0 32px}
.sb-dots{width:6px;display:flex;flex-direction:column;gap:3px;margin:5px 0 0 536px;padding-top:3px}
.sb-dots i{width:2px;height:2px;background:#b4b4b4}
.hscroll{width:509px;height:16px;margin:7px 0 0 11px;background:#e6e6e6;border:1px solid #ababab;display:flex}
.hbtn{width:15px;background:#fff;display:flex;align-items:center;justify-content:center;flex:none}
.hthumb{width:455px;background:#fff;border-left:1px solid #ababab;border-right:1px solid #ababab}
.htrack{flex:1}
.tri-l{border:4px solid transparent;border-right:4px solid #777;border-left:0}
.tri-r{border:4px solid transparent;border-left:4px solid #777;border-right:0}

/* status */
.status{height:21px;flex:none;background:#f3f2f1;display:flex;align-items:center;font-size:11.500px;color:#444;letter-spacing:-.15px}
.status>span{flex:none}
.ready{margin-left:7px;width:984px}
.count{width:75px;white-space:nowrap}
.view{width:40px;height:21px;display:flex;align-items:center;justify-content:center}
.view.on{background:#d2d2d2}
.zm-minus{margin-left:4px;width:15px;font-size:15px}
.slider{width:100px;height:1px;background:#999;position:relative}
.slider i{position:absolute;left:48px;top:-5px;width:5px;height:11px;background:#666}
.zm-plus{margin-left:3px;width:23px;font-size:16px}
.zoom{white-space:nowrap;letter-spacing:-.4px}

/* taskbar */
.taskbar{height:40px;flex:none;background:#25333d;display:flex;color:#fff}
.tk{width:49px;height:40px;display:flex;align-items:center;justify-content:center;position:relative;flex:none}
.tk.wide{width:48px}
.tk.first{margin-left:2px}
.run::after,.active::after{content:"";position:absolute;left:4px;right:5px;bottom:0;height:2px;background:#6bb1e3}
.active{background:#4b5b67}
.active::after{left:0;right:0}
.tkx{font:700 11px "Liberation Sans",sans-serif;fill:#fff}
.tkg{font:700 12px "Liberation Sans",sans-serif;fill:#fff}
.tkp{font:700 5.500px "Liberation Sans",sans-serif;fill:#fff}
.en-box{width:24px;height:24px;background:linear-gradient(165deg,#fff 74%,#5b3fa8 75%);color:#111;border-radius:3px;font:700 11px/24px "Liberation Sans",sans-serif;text-align:center}
.tray{display:flex;align-items:center;margin-left:auto;flex:none}
.tr-news{margin-right:18px}
.tr-up{margin-right:10px}
.tr-net{margin-right:6px}
.tr-vol{margin-right:14px}
.tr-lang{font:12px "DejaVu Sans",sans-serif;width:18px;text-align:center}
.tr-clock{width:68px;margin-left:7px;display:flex;flex-direction:column;align-items:center;font-size:12px;line-height:18px;letter-spacing:-.3px}
.tr-note{position:relative;width:52px;display:flex;justify-content:flex-start;height:40px;align-items:center;padding:0 0 5px 11px}
.tr-note b{position:absolute;left:18px;top:20px;width:17px;height:17px;border-radius:50%;background:#25333d;border:1px solid #bbb;font:400 11px/15px "Liberation Sans",sans-serif;text-align:center}

/* dialog */
.dialog{position:absolute;left:393px;top:92px;width:506px;height:411px;background:#f0f0f0;border:1px solid #6e6e6e;box-shadow:0 0 14px rgba(0,0,0,.4);z-index:5;color:#1a1a1a;font-size:10.800px;letter-spacing:.105px;white-space:nowrap}
.d-title{height:29px;background:#fff;display:flex;align-items:center;padding:0 0 3px 7px;font-size:11.800px;letter-spacing:-.18px;position:relative}
.d-help{position:absolute;left:433px;top:6px;font-size:13px}
.d-x{position:absolute;left:476px;top:8px}
.d-body{display:flex;flex-direction:column;padding:3px 7px 0 4px}
.d-p1{line-height:21px}
.d-p2{line-height:21px}
.d-group{width:491px;height:69px;margin:10px 0 0 1px;border:1px solid #dcdcdc;padding-left:8px;position:relative}
.d-legend{position:absolute;left:4px;top:-7px;background:#f0f0f0;padding:0 2px;line-height:14px}
.d-choose{line-height:18px;margin:11px 0 -2px}
.d-radio{display:flex;align-items:center;height:19px;margin-left:17px}
.radio{width:14px;height:14px;border-radius:50%;border:1px solid #5a5a5a;background:#fff;flex:none;position:relative;margin-right:4px}
.radio.on::after{content:"";position:absolute;left:3px;top:3px;width:6px;height:6px;border-radius:50%;background:#333}
.r-name{width:72px}
.d-prev{margin:89px 0 0 10px;line-height:18px}
.pv{display:flex;margin:9px 0 0 10px;height:77px}
.pv-box{width:459px;height:77px;background:#fff;border:1px solid #111;border-bottom:0;overflow:hidden;flex:none;font:11.550px/13px "Liberation Mono",monospace;color:#222;letter-spacing:0}
.pv-l{display:flex;height:14px;align-items:stretch}
.pv-l:first-child{height:17px}
.pv-l:first-child b,.pv-l:first-child span{padding-top:3px}
.pv-l b{width:13px;flex:none;border-right:1px solid #111;border-bottom:1px solid #111;text-align:center;font-weight:400}
.pv-l span{white-space:pre}
.pv-v{width:17px;display:flex;flex-direction:column;align-items:center;padding-top:6px}
.pv-v i{width:15px;height:17px;background:#cdcdcd;margin:5px 0 31px;flex:none}
.pv-v svg{flex:none}
.pv-h{display:flex;align-items:center;width:459px;height:15px;margin:0 0 0 10px;padding:0 5px;justify-content:space-between}
.pv-h i{width:109px;height:15px;background:#cdcdcd;margin-right:auto;margin-left:6px}
.d-btns{display:flex;gap:10px;margin:18px 0 0 167px}
.btn{width:74px;height:22px;background:#e1e1e1;border:1px solid #adadad;font:inherit;font-size:11px;color:#1a1a1a;padding:0;letter-spacing:0}
.btn.dis{color:#8a8a8a;border-color:#bfbfbf}
.btn.def{background:#e5f1fb;border:2px solid #0078d7;padding:1px}
.btn.def span{display:block;height:16px;line-height:14px;border:1px dotted #111}
```
